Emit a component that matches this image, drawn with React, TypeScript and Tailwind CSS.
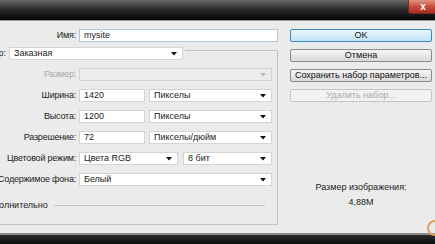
import React from "react";

function Arrow({ gray = false }: { gray?: boolean }) {
  return (
    <svg width="6" height="4" viewBox="0 0 6 4" className="shrink-0">
      <polygon points="0,0 6,0 3,3.5" fill={gray ? "#b8b8b8" : "#111111"} />
    </svg>
  );
}

function Select({ w, text, disabled = false }: { w: string; text?: string; disabled?: boolean }) {
  return (
    <div
      className={`${w} h-[13px] shrink-0 flex items-center justify-between pl-[4px] pr-[5px] border ${
        disabled ? "bg-[#ececec] border-[#d2d2d2]" : "bg-white border-[#d4d4d4]"
      }`}
    >
      <span className="leading-none whitespace-nowrap">{text}</span>
      <Arrow gray={disabled} />
    </div>
  );
}

function Input({ w, text, focused = false }: { w: string; text: string; focused?: boolean }) {
  return (
    <div
      className={`${w} h-[13px] shrink-0 flex items-center pl-[4px] bg-white border ${
        focused ? "border-[#a9cbe6]" : "border-[#d4d4d4]"
      }`}
    >
      <span className="leading-none whitespace-nowrap">{text}</span>
    </div>
  );
}

function Label({ children, gray = false }: { children: React.ReactNode; gray?: boolean }) {
  return (
    <div
      className={`w-[76px] shrink-0 flex justify-end whitespace-nowrap leading-none tracking-[-0.2px] ${
        gray ? "text-[#a6a6a6]" : "text-[#1c1c1c]"
      }`}
    >
      {children}
    </div>
  );
}

function Button({
  children,
  kind = "normal",
}: {
  children: React.ReactNode;
  kind?: "default" | "normal" | "disabled";
}) {
  const cls =
    kind === "default"
      ? "bg-gradient-to-b from-[#eaf6fd] to-[#bfe3f5] border-[#3d8ac0] text-[#111]"
      : kind === "disabled"
      ? "bg-[#f2f2f2] border-[#c4c4c4] text-[#a8a8a8]"
      : "bg-gradient-to-b from-[#f6f6f6] to-[#d9d9d9] border-[#8a8a8a] text-[#111]";
  return (
    <div
      className={`h-[13px] w-[142px] rounded-[2px] border flex items-center justify-center whitespace-nowrap leading-none ${cls}`}
    >
      {children}
    </div>
  );
}

export default function App() {
  return (
    <div className="w-[435px] h-[244px] overflow-hidden relative flex flex-col bg-[#ebebeb] font-['Liberation_Sans',Arial,sans-serif] text-[9px] text-[#1c1c1c]">
      {/* title bar */}
      <div className="h-[21px] shrink-0 flex justify-end items-start bg-gradient-to-b from-[#6a6a6a] via-[#262626] to-[#070707] border-b border-[#9a9a9a]">
        <div className="w-[30px] h-[14px] mr-[-3px] rounded-bl-[3px] border border-t-0 border-[#7a2a22] bg-gradient-to-b from-[#de9484] via-[#c84e3f] to-[#a82c20] flex items-center justify-center text-white font-bold text-[10px] leading-none">
          x
        </div>
      </div>

      {/* body */}
      <div className="flex-1 flex">
        {/* left */}
        <div className="w-[278px] shrink-0 flex flex-col pt-[8px]">
          <div className="flex items-center h-[13px]">
            <Label>Имя:</Label>
            <div className="ml-[3px]">
              <Input w="w-[199px]" text="mysite" focused />
            </div>
          </div>

          <div className="flex items-stretch h-[13px] mt-[5px]">
            <div className="w-[6px] shrink-0 flex justify-end items-center whitespace-nowrap leading-none">
              Набор:
            </div>
            <div className="ml-[3px]">
              <Select w="w-[174px]" text="Заказная" />
            </div>
            <div className="flex-1 ml-[2px] mt-[3px] border-t border-r border-[#c4c4c4]" />
          </div>

          <div className="flex flex-col border-r border-b border-[#c4c4c4] pt-[8px] pb-[13px] gap-[8px]">
            <div className="flex items-center h-[13px]">
              <Label gray>Размер:</Label>
              <div className="ml-[3px]">
                <Select w="w-[193px]" disabled />
              </div>
            </div>
            <div className="flex items-center h-[13px]">
              <Label>Ширина:</Label>
              <div className="ml-[3px] flex gap-[4px]">
                <Input w="w-[66px]" text="1420" />
                <Select w="w-[123px]" text="Пикселы" />
              </div>
            </div>
            <div className="flex items-center h-[13px]">
              <Label>Высота:</Label>
              <div className="ml-[3px] flex gap-[4px]">
                <Input w="w-[66px]" text="1200" />
                <Select w="w-[123px]" text="Пикселы" />
              </div>
            </div>
            <div className="flex items-center h-[13px]">
              <Label>Разрешение:</Label>
              <div className="ml-[3px] flex gap-[4px]">
                <Input w="w-[66px]" text="72" />
                <Select w="w-[123px]" text="Пикселы/дюйм" />
              </div>
            </div>
            <div className="flex items-center h-[13px]">
              <Label>Цветовой режим:</Label>
              <div className="ml-[3px] flex gap-[5px]">
                <Select w="w-[99px]" text="Цвета RGB" />
                <Select w="w-[89px]" text="8 бит" />
              </div>
            </div>
            <div className="flex items-center h-[13px]">
              <Label>Содержимое фона:</Label>
              <div className="ml-[3px]">
                <Select w="w-[193px]" text="Белый" />
              </div>
            </div>
            <div className="flex items-center h-[11px] mt-[6px] pr-[12px]">
              <div className="ml-[-17px] whitespace-nowrap leading-none">Дополнительно</div>
              <div className="flex-1 ml-[6px] border-t border-[#c4c4c4]" />
            </div>
          </div>
        </div>

        {/* right */}
        <div className="ml-[12px] w-[142px] shrink-0 flex flex-col pt-[8px]">
          <div className="flex flex-col gap-[7px]">
            <Button kind="default">OK</Button>
            <Button>Отмена</Button>
            <Button>Сохранить набор параметров...</Button>
            <Button kind="disabled">Удалить набор...</Button>
          </div>
          <div className="mt-[81px] flex flex-col items-center gap-[6px] leading-none">
            <div>Размер изображения:</div>
            <div>4,88M</div>
          </div>
        </div>
      </div>

      {/* bottom bar */}
      <div className="h-[11px] shrink-0 border-t-2 border-[#8a8a8a] bg-gradient-to-b from-[#2a2a2a] to-[#0c0c0c]" />

      {/* orange circle overlay */}
      <div className="absolute left-[427px] top-[220px] w-[16px] h-[16px] rounded-full border-2 border-[#d9a55a]" />
    </div>
  );
}
